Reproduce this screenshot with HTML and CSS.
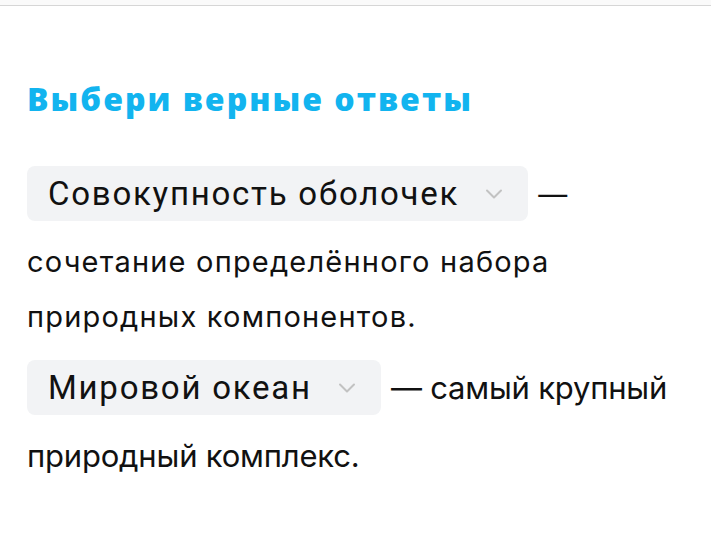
FILE: index.html
```html
<!DOCTYPE html>
<html lang="ru">
<head>
    <meta charset="UTF-8">
    <meta name="viewport" content="width=device-width, initial-scale=1.0">
    <title>Выбери верные ответы</title>
    <link rel="stylesheet" href="styles.css">
</head>
<body>
    <div class="topbar"></div>

    <!-- Task -->
    <div class="task">
        <h1 class="task-title">Выбери верные ответы</h1>

        <p class="sentence">
            <span class="select">
                <span class="select-value">Совокупность оболочек</span>
                <svg class="select-arrow" viewBox="0 0 18 10" width="18" height="10"><path d="M2 1.5l7 7 7-7" fill="none" stroke="currentColor" stroke-width="2" stroke-linecap="round" stroke-linejoin="round"/></svg>
            </span>
            <span class="plain">— сочетание определённого набора природных компонентов.</span>
        </p>

        <p class="sentence">
            <span class="select">
                <span class="select-value">Мировой океан</span>
                <svg class="select-arrow" viewBox="0 0 18 10" width="18" height="10"><path d="M2 1.5l7 7 7-7" fill="none" stroke="currentColor" stroke-width="2" stroke-linecap="round" stroke-linejoin="round"/></svg>
            </span>
            <span class="plain large">— самый крупный природный комплекс.</span>
        </p>
    </div>
</body>
</html>
```

FILE: styles.css
```css
/* Reset */
* {
    box-sizing: border-box;
    margin: 0;
    padding: 0;
}
body {
    background: #fff;
    color: #111;
    font-family: Inter, "Noto Sans", sans-serif;
}
.topbar {
    height: 6px;
    border-bottom: 1px solid #d6d6d6;
    background: #fafafa;
}

/* Task */
.task {
    padding: 73px 28px 0 27px;
}
.task-title {
    font-family: "Open Sans", sans-serif;
    font-weight: 800;
    font-size: 32px;
    line-height: 40px;
    letter-spacing: 2px;
    color: #12b4ef;
    margin-bottom: 47px;
}

/* Sentences */
.sentence {
    font-size: 29px;
    line-height: 55px;
    margin-bottom: 16px;
}
.select {
    display: inline-flex;
    align-items: center;
    height: 55px;
    padding: 0 25px 0 21px;
    margin: 0 2px 13px 0;
    background: #f2f3f5;
    border-radius: 8px;
    vertical-align: baseline;
    font-family: Roboto, sans-serif;
    font-size: 33px;
    letter-spacing: 1.75px;
}
.select-arrow {
    margin-left: 26px;
    color: #c2c2c2;
}
.plain {
    letter-spacing: 1.2px;
}
.large {
    font-size: 31px;
    letter-spacing: -0.2px;
}
```
